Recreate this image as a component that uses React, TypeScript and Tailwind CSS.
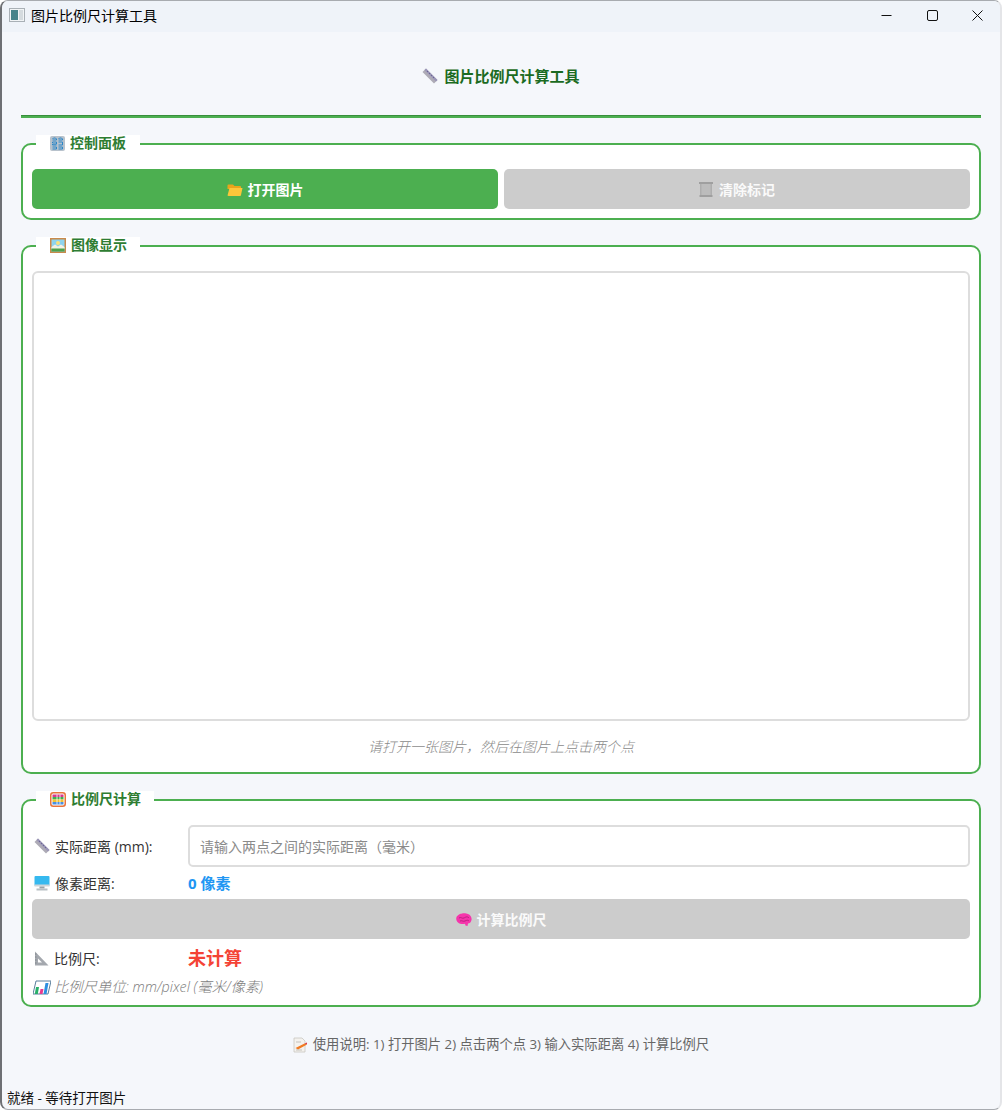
import type { ReactNode } from "react";

const FONT = '"Open Sans", "Noto Sans CJK SC", sans-serif';

const RulerIcon = () => (
  <svg width="16" height="16" viewBox="0 0 16 16" className="shrink-0">
    <path d="M4 0.500 15.500 12 12 15.500 0.500 4Z" fill="#aeabb6" />
    <path d="M4 0.500 15.500 12 14 13.500 2.500 2Z" fill="#9a95b8" />
    <path d="M5 3 6 4M7 5 8 6M9 7 10 8M11 9 12 10" stroke="#5f5a86" strokeWidth="0.8" />
  </svg>
);

const KeypadIcon = () => (
  <svg width="15" height="15" viewBox="0 0 15 15" className="shrink-0">
    <rect width="15" height="15" rx="2" fill="#b8c2cc" />
    <path d="M2.500 3 3.500 2H5.500L6.500 3V4H2.500M8.500 3 9.500 2H11.500L12.500 3V4H8.500M2.500 7V6H6.500V8H2.500V9H6.500M8.500 6H12.500V9H8.500M2.500 11H6.500V13H2.500M8.500 11H12.500V13H8.500" fill="none" stroke="#2a86c8" strokeWidth="1" />
  </svg>
);

const FolderIcon = () => (
  <svg width="16" height="14" viewBox="0 0 16 14" className="shrink-0">
    <path d="M0.500 2.500A1 1 0 0 1 1.500 1.500H6L7.500 3H13A1 1 0 0 1 14 4V6H0.500Z" fill="#e8a41c" />
    <path d="M0.500 12.500 2.500 5H15.500L14 12A1 1 0 0 1 13 13H1.500Z" fill="#fcc63a" />
  </svg>
);

const TrashIcon = () => (
  <svg width="14" height="15" viewBox="0 0 14 15" className="shrink-0">
    <rect x="0" y="0" width="14" height="2" fill="#9f9f9f" />
    <rect x="1" y="2" width="12" height="11" fill="#bcbcbc" />
    <path d="M1 2h1.500v11H1ZM11.500 2H13v11h-1.500Z" fill="#aeaeae" />
    <rect x="0.500" y="13" width="13" height="2" fill="#9f9f9f" />
  </svg>
);

const PictureIcon = () => (
  <svg width="16" height="15" viewBox="0 0 16 15" className="shrink-0">
    <rect width="16" height="15" fill="#c98a4b" />
    <rect x="1.500" y="1.500" width="13" height="12" fill="#8fd4ee" />
    <circle cx="8" cy="5" r="2" fill="#fbe27c" />
    <path d="M1.500 9 5 6.500 8 8.500 11 6.500 14.500 9V11H1.500Z" fill="#f2f2e6" />
    <rect x="1.500" y="10.500" width="13" height="3" fill="#4fa24a" />
  </svg>
);

const AbacusIcon = () => (
  <svg width="16" height="15" viewBox="0 0 16 15" className="shrink-0">
    <rect x="0.750" y="0.750" width="14.500" height="13.500" rx="2.500" fill="#fff" stroke="#e8743c" strokeWidth="1.500" />
    <rect x="2.500" y="2.500" width="11" height="2.500" fill="#d8388c" />
    <rect x="2.500" y="5" width="11" height="2.500" fill="#3fb04f" />
    <rect x="2.500" y="7.500" width="11" height="2.500" fill="#f2c230" />
    <rect x="2.500" y="10" width="11" height="2.500" fill="#4a8fe0" />
    <path d="M7 2.500V12.500M10 2.500V12.500" stroke="#ffffff" strokeWidth="0.800" />
  </svg>
);

const MonitorIcon = () => (
  <svg width="16" height="15" viewBox="0 0 16 15" className="shrink-0">
    <rect width="15" height="10" x="0.500" rx="1" fill="#36b9ef" />
    <rect x="0.500" y="8.500" width="15" height="2" fill="#cfd6da" />
    <rect x="5.500" y="10.500" width="5" height="2" fill="#9aa3a8" />
    <rect x="2.500" y="12.500" width="11" height="2" fill="#b8bfc4" />
  </svg>
);

const BrainIcon = () => (
  <svg width="16" height="14" viewBox="0 0 16 14" className="shrink-0">
    <path d="M4.500 0.800C6 0 10 -0.200 12 1 14.500 2 16 4.500 15.500 7 15 9.500 13.500 10.500 12 10.500L11.500 13 9.500 12.500 9 10.800C7 11.500 3.500 11 2 9.500 0 8 -0.500 4.500 1.500 2.800 2.500 1.700 3.500 1.200 4.500 0.800Z" fill="#f535ab" />
    <path d="M3 5C5 3.500 6 6 8 5S11 3 13 5M4 8C6 7 7 9 9 8S12 7 13 8" fill="none" stroke="#b51c7c" strokeWidth="0.900" />
  </svg>
);

const TriangleIcon = () => (
  <svg width="15" height="15" viewBox="0 0 15 15" className="shrink-0">
    <path fillRule="evenodd" d="M1 0.500 14.500 14.500H1ZM4 7.500V11.500H8Z" fill="#a4a8ae" />
    <path d="M1 3h1.500M1 6h1.500M1 9h1.500M1 12h1.500" stroke="#74787e" strokeWidth="0.700" />
  </svg>
);

const ChartIcon = () => (
  <svg width="18" height="15" viewBox="0 0 18 15" className="shrink-0">
    <path d="M3 1H18L15 14H0Z" fill="#ffffff" stroke="#5a7f9c" strokeWidth="1" />
    <path d="M3 7H6L4.800 14H1.800Z" fill="#29b06a" />
    <path d="M7.500 9H10.500L9.500 14H6.500Z" fill="#e83a8f" />
    <path d="M12.500 3H15.500L13.500 14H10.500Z" fill="#2c8fe0" />
  </svg>
);

const MemoIcon = () => (
  <svg width="15" height="16" viewBox="0 0 15 16" className="shrink-0">
    <path d="M1 1H9L12 4V15H1Z" fill="#f4f2ee" stroke="#c9c6c0" strokeWidth="0.800" />
    <path d="M3 5H8M3 13H9" stroke="#b9b6b0" strokeWidth="0.800" />
    <path d="M2.500 11 11.500 6.500 14 7.500 5 12.500Z" fill="#f07a22" />
    <path d="M11.500 6.500 14 5.500 14 7.500Z" fill="#d83a4a" />
  </svg>
);

const AppIcon = () => (
  <svg width="16" height="14" viewBox="0 0 16 14" className="shrink-0">
    <rect x="0.500" y="0.500" width="15" height="13" fill="#f1f4f6" stroke="#a9b0b6" />
    <rect x="2" y="2" width="7" height="10" fill="#46838a" />
    <rect x="10" y="2" width="4" height="10" fill="#d5dbdf" />
  </svg>
);

const GroupBox = ({
  title,
  icon,
  gapWidth,
  className,
  children,
}: {
  title: string;
  icon: ReactNode;
  gapWidth: string;
  className: string;
  children: ReactNode;
}) => (
  <section className={`relative rounded-[10px] border-2 border-[#4caf50] bg-white px-[9px] ${className}`}>
    <div className={`absolute left-[13px] top-[-10px] flex h-[16px] items-center gap-[5px] bg-white pl-[14px] ${gapWidth}`}>
      {icon}
      <span className="text-[14px] leading-[16px] font-bold whitespace-nowrap text-[#2e7d32]">{title}</span>
    </div>
    {children}
  </section>
);

const FieldLabel = ({ icon, text }: { icon: ReactNode; text: string }) => (
  <div className="flex w-[156px] shrink-0 items-center gap-[5px] pl-[2px] text-[14px] text-[#333333]">
    {icon}
    <span>{text}</span>
  </div>
);

const App = () => {
  return (
    <div
      className="flex h-[1110px] w-[1002px] flex-col overflow-hidden rounded-[8px] border-y border-r-2 border-l-2 border-t-[#a8abb0] border-r-[#e4e5e8] border-b-[#a8abb0] border-l-[#6e7074] bg-[#f5f7fb]"
      style={{ fontFamily: FONT }}
    >
      {/* title bar */}
      <div className="flex h-[31px] shrink-0 items-center bg-[#eff3f9] pr-[17px] pb-[3px] pl-[7px]">
        <AppIcon />
        <span className="ml-[6px] text-[14px] text-black">图片比例尺计算工具</span>
        <div className="ml-auto flex items-center gap-[34.500px]">
          <svg width="11" height="11" viewBox="0 0 11 11">
            <path d="M0.500 5.500H10.500" stroke="#111" strokeWidth="1" />
          </svg>
          <svg width="11" height="11" viewBox="0 0 11 11">
            <rect x="0.500" y="0.500" width="10" height="10" rx="1.500" fill="none" stroke="#111" />
          </svg>
          <svg width="11" height="11" viewBox="0 0 11 11">
            <path d="M0.500 0.500 10.500 10.500M10.500 0.500 0.500 10.500" stroke="#111" strokeWidth="1" />
          </svg>
        </div>
      </div>

      <div className="flex flex-1 flex-col px-[19px]">
        {/* heading */}
        <header className="h-[86px] shrink-0 border-b-2 border-b-[#4caf50]">
          <div className="flex h-[84px] items-center justify-center gap-[6px] border-b border-b-[#388e3c] pt-[5px]">
            <RulerIcon />
            <h1 className="text-[15px] font-bold text-[#1b6b22]">图片比例尺计算工具</h1>
          </div>
        </header>

        {/* control panel */}
        <GroupBox title="控制面板" icon={<KeypadIcon />} gapWidth="w-[104px]" className="mt-[25px] h-[77px] pt-[24px]">
          <div className="flex gap-[6px]">
            <button type="button" className="flex h-10 flex-1 items-center justify-center gap-[5px] rounded-[5px] bg-[#4caf50] pt-[1px] text-[14px] font-bold text-white">
              <FolderIcon />
              打开图片
            </button>
            <button type="button" className="flex h-10 flex-1 items-center justify-center gap-[6px] rounded-[5px] bg-[#cccccc] pt-[1px] text-[14px] font-bold text-[#fafafa]">
              <TrashIcon />
              清除标记
            </button>
          </div>
        </GroupBox>

        {/* image display */}
        <GroupBox title="图像显示" icon={<PictureIcon />} gapWidth="w-[104px]" className="mt-[25px] h-[529px] pt-[24px]">
          <div className="h-[450px] rounded-[6px] border-2 border-[#dddddd] bg-white" />
          <p className="mt-[15px] text-center text-[14px] font-light text-[#8a8a8a] italic">请打开一张图片，然后在图片上点击两个点</p>
        </GroupBox>

        {/* scale calculation */}
        <GroupBox title="比例尺计算" icon={<AbacusIcon />} gapWidth="w-[118px]" className="mt-[25px] h-[208px] pt-[24px]">
          <div className="flex h-[42px] items-center">
            <FieldLabel icon={<RulerIcon />} text="实际距离 (mm):" />
            <input
              readOnly
              placeholder="请输入两点之间的实际距离（毫米）"
              className="h-[42px] flex-1 rounded-[5px] border-2 border-[#dddddd] bg-white px-[10px] text-[14px] placeholder:text-[#8a8a8a]"
            />
          </div>
          <div className="mt-[3px] flex h-[26px] items-center">
            <FieldLabel icon={<MonitorIcon />} text="像素距离:" />
            <span className="text-[15px] font-bold text-[#2196f3]">0 像素</span>
          </div>
          <button type="button" className="mt-[3px] flex h-10 w-full items-center justify-center gap-[5px] rounded-[5px] bg-[#cccccc] pt-[1px] text-[14px] font-bold text-[#fafafa]">
            <BrainIcon />
            计算比例尺
          </button>
          <div className="mt-[4px] flex h-[30px] items-center">
            <FieldLabel icon={<TriangleIcon />} text="比例尺:" />
            <span className="text-[18px] font-bold text-[#f44336]">未计算</span>
          </div>
          <div className="mt-[2px] flex h-[24px] items-center gap-[3px] pl-[1px] text-[14.300px] font-light text-[#7d7d7d] italic">
            <ChartIcon />
            <span>比例尺单位: mm/pixel (毫米/像素)</span>
          </div>
        </GroupBox>

        {/* usage */}
        <div className="mt-[28px] flex items-center justify-center gap-[5px] text-[13.300px] text-[#666666]">
          <MemoIcon />
          <span>使用说明: 1) 打开图片 2) 点击两个点 3) 输入实际距离 4) 计算比例尺</span>
        </div>
      </div>

      {/* status bar */}
      <div className="h-[22px] shrink-0 pl-[5px] text-[13.500px] leading-[22px] text-[#111111]">就绪 - 等待打开图片</div>
    </div>
  );
};

export default App;
